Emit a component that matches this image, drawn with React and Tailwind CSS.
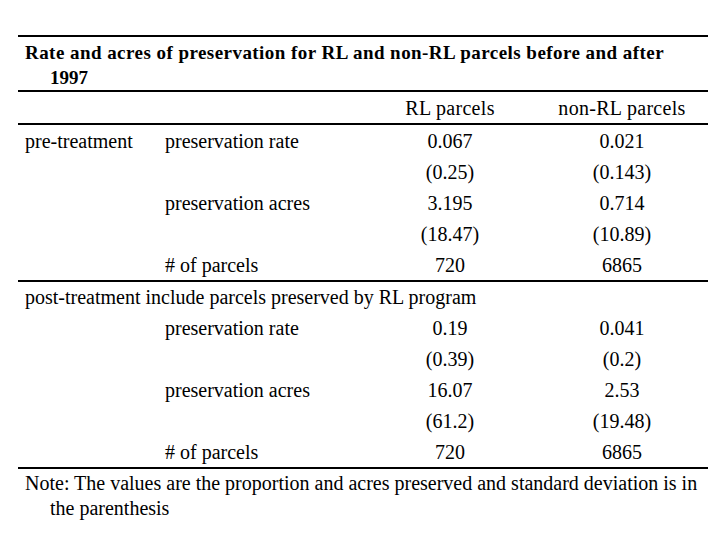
const ROWS_PRE = [
  { a: 'pre-treatment', b: 'preservation rate', rl: '0.067', non: '0.021' },
  { a: '', b: '', rl: '(0.25)', non: '(0.143)' },
  { a: '', b: 'preservation acres', rl: '3.195', non: '0.714' },
  { a: '', b: '', rl: '(18.47)', non: '(10.89)' },
  { a: '', b: '# of parcels', rl: '720', non: '6865' },
];

const ROWS_POST = [
  { b: 'preservation rate', rl: '0.19', non: '0.041' },
  { b: '', rl: '(0.39)', non: '(0.2)' },
  { b: 'preservation acres', rl: '16.07', non: '2.53' },
  { b: '', rl: '(61.2)', non: '(19.48)' },
  { b: '# of parcels', rl: '720', non: '6865' },
];

const GRID = 'grid grid-cols-[147px_199px_172px_172px] h-[31px] items-center';

function Row({ r }) {
  return (
    <div className={GRID}>
      <div className="pl-[7px] whitespace-nowrap">{r.a}</div>
      <div className="whitespace-nowrap">{r.b}</div>
      <div className="text-center">{r.rl}</div>
      <div className="text-center">{r.non}</div>
    </div>
  );
}

export default function App() {
  return (
    <div
      className="w-[720px] h-[540px] bg-white text-black text-[20px] leading-none pt-[35px]"
      style={{ fontFamily: '"Liberation Serif", "Times New Roman", serif' }}
    >
      <div className="ml-[18px] w-[690px]">
        <div className="border-t-2 border-black pt-[3px] pl-[7px] font-bold text-[19px] leading-[25px]">
          <div className="tracking-[0.45px] whitespace-nowrap">
            Rate and acres of preservation for RL and non-RL parcels before and after
          </div>
          <div className="pl-[25px]">1997</div>
        </div>
        <div className="border-t-2 border-black">
          <div className={`${GRID} h-[29px]`}>
            <div />
            <div />
            <div className="text-center tracking-[0.3px]">RL parcels</div>
            <div className="text-center tracking-[0.3px]">non-RL parcels</div>
          </div>
        </div>
        <div className="border-t-2 border-black">
          {ROWS_PRE.map((r, i) => (
            <Row key={i} r={r} />
          ))}
        </div>
        <div className="border-t-2 border-black">
          <div className="h-[30px] flex items-center pl-[7px] whitespace-nowrap">
            post-treatment include parcels preserved by RL program
          </div>
          {ROWS_POST.map((r, i) => (
            <Row key={i} r={{ a: '', ...r }} />
          ))}
        </div>
        <div className="border-t-2 border-black pt-[2px] pl-[7px] leading-[25px]">
          <div className="whitespace-nowrap">
            Note: The values are the proportion and acres preserved and standard deviation is in
          </div>
          <div className="pl-[25px]">the parenthesis</div>
        </div>
      </div>
    </div>
  );
}
